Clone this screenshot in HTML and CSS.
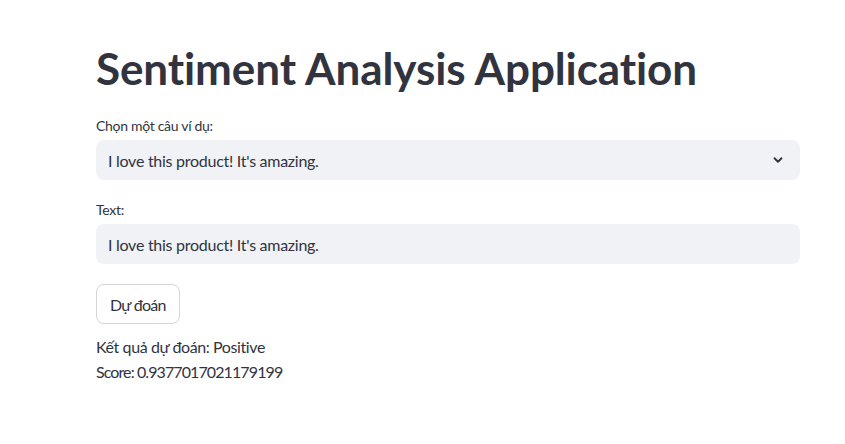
FILE: index.html
```html
<!DOCTYPE html>
<html lang="vi">
<head>
<meta charset="utf-8">
<link rel="stylesheet" href="styles.css">
</head>
<body>
<main class="main">
  <h1 class="title">Sentiment Analysis Application</h1>
  <div class="field">
    <label class="label">Chọn một câu ví dụ:</label>
    <div class="select">
      <span>I love this product! It's amazing.</span>
      <svg class="chev" width="14" height="14" viewBox="0 0 24 24"><path d="M6 9l6 6 6-6" fill="none" stroke="#31333f" stroke-width="3.2" stroke-linecap="round" stroke-linejoin="round"/></svg>
    </div>
  </div>
  <div class="field">
    <label class="label">Text:</label>
    <div class="input">I love this product! It's amazing.</div>
  </div>
  <div class="btn-row"><button class="btn">Dự đoán</button></div>
  <div class="result">
    <p class="verdict">Kết quả dự đoán: Positive</p>
    <p class="score">Score: 0.9377017021179199</p>
  </div>
</main>
</body>
</html>
```

FILE: styles.css
```css
* { box-sizing: border-box; }
html, body { margin: 0; padding: 0; background: #fff; }
body {
  font-family: "Lato", "Liberation Sans", sans-serif;
  font-variant-ligatures: none;
  color: #31333f;
  width: 845px;
  height: 444px;
  overflow: hidden;
}
.main {
  width: 704px;
  margin-left: 96px;
  padding-top: 40px;
  display: flex;
  flex-direction: column;
}
.title {
  margin: 0 0 20px 0;
  font-size: 44px;
  font-weight: 700;
  line-height: 56px;
  letter-spacing: -0.1px;
}
.field { display: flex; flex-direction: column; margin-bottom: 20px; }
.field:last-of-type { margin-bottom: 16px; }
.label { font-size: 14px; line-height: 20px; margin-bottom: 4px; letter-spacing: -0.3px; }
.select, .input {
  height: 40px;
  background: #f0f2f6;
  border-radius: 8px;
  padding: 0 12px;
  display: flex;
  align-items: center;
  font-size: 16px;
  letter-spacing: -0.27px;
}
.select { justify-content: space-between; padding-right: 15px; }
.btn-row { display: flex; }
.btn {
  height: 40px;
  padding: 0 13px;
  border: 1px solid #d6d6d9;
  border-radius: 8px;
  background: #fff;
  color: #31333f;
  font-family: inherit;
  font-variant-ligatures: none;
  font-size: 16px;
  letter-spacing: -0.7px;
}
.result { margin-top: 10px; font-size: 16px; }
.result p { margin: 0; line-height: 25px; }
.verdict { letter-spacing: -0.4px; }
.score { letter-spacing: -0.9px; }
```
